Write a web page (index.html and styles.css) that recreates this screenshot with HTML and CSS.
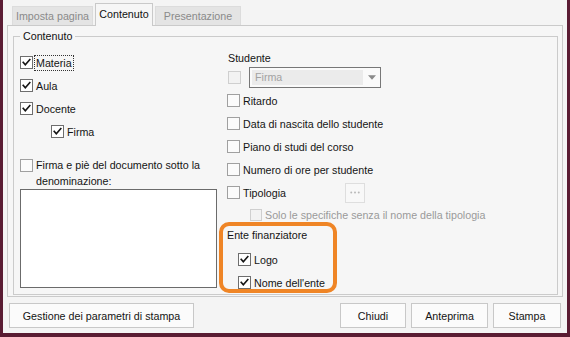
FILE: index.html
```html
<!DOCTYPE html>
<html lang="it">
<head>
<meta charset="utf-8">
<title>Stampa</title>
<link rel="stylesheet" href="styles.css">
</head>
<body>
<div class="frame">
  <div class="window">
    <div class="tabs">
      <div class="tab tab-a">Imposta pagina</div>
      <div class="tab tab-b active">Contenuto</div>
      <div class="tab tab-c">Presentazione</div>
    </div>
    <div class="panel">
      <fieldset class="group">
        <legend>Contenuto</legend>
        <div class="cols">
          <div class="col-left">
            <div class="row"><span class="cb on"><svg viewBox="0 0 11 11"><path d="M2.2 5.4 L4.3 7.8 L8.8 2.6"/></svg></span><span class="txt focus">Materia</span></div>
            <div class="row"><span class="cb on"><svg viewBox="0 0 11 11"><path d="M2.2 5.4 L4.3 7.8 L8.8 2.6"/></svg></span><span class="txt">Aula</span></div>
            <div class="row"><span class="cb on"><svg viewBox="0 0 11 11"><path d="M2.2 5.4 L4.3 7.8 L8.8 2.6"/></svg></span><span class="txt">Docente</span></div>
            <div class="row indent"><span class="cb on"><svg viewBox="0 0 11 11"><path d="M2.2 5.4 L4.3 7.8 L8.8 2.6"/></svg></span><span class="txt">Firma</span></div>
            <div class="multi"><span class="cb off"></span><span class="txt">Firma e piè del documento sotto la<br>denominazione:</span></div>
            <div class="memo"></div>
          </div>
          <div class="col-right">
            <div class="head">Studente</div>
            <div class="select-row">
              <span class="cb dis"></span>
              <div class="select">
                <div class="select-value">Firma</div>
                <div class="select-arrow"><svg viewBox="0 0 9 5"><path d="M0 0 L9 0 L4.5 5 Z"/></svg></div>
              </div>
            </div>
            <div class="row"><span class="cb off"></span><span class="txt">Ritardo</span></div>
            <div class="row"><span class="cb off"></span><span class="txt">Data di nascita dello studente</span></div>
            <div class="row"><span class="cb off"></span><span class="txt">Piano di studi del corso</span></div>
            <div class="row"><span class="cb off"></span><span class="txt">Numero di ore per studente</span></div>
            <div class="row"><span class="cb off"></span><span class="txt tip">Tipologia</span><span class="dots"><svg viewBox="0 0 12 3"><circle cx="1.5" cy="1.5" r="1.2"/><circle cx="6" cy="1.5" r="1.2"/><circle cx="10.5" cy="1.5" r="1.2"/></svg></span></div>
            <div class="row solo"><span class="cb dis small"></span><span class="txt muted">Solo le specifiche senza il nome della tipologia</span></div>
            <div class="ente">
              <div class="ente-title">Ente finanziatore</div>
              <div class="row sub"><span class="cb on"><svg viewBox="0 0 11 11"><path d="M2.2 5.4 L4.3 7.8 L8.8 2.6"/></svg></span><span class="txt">Logo</span></div>
              <div class="row sub"><span class="cb on"><svg viewBox="0 0 11 11"><path d="M2.2 5.4 L4.3 7.8 L8.8 2.6"/></svg></span><span class="txt">Nome dell'ente</span></div>
              <div class="highlight"></div>
            </div>
          </div>
        </div>
      </fieldset>
    </div>
    <div class="buttons">
      <button class="btn btn-params">Gestione dei parametri di stampa</button>
      <span class="spacer"></span>
      <button class="btn btn-close">Chiudi</button>
      <button class="btn btn-preview">Anteprima</button>
      <button class="btn btn-print">Stampa</button>
    </div>
  </div>
</div>
</body>
</html>
```
FILE: styles.css
```css
* { box-sizing: border-box; }
html, body { margin: 0; padding: 0; }
body {
  width: 570px;
  height: 337px;
  overflow: hidden;
  font-family: "Liberation Sans", Arial, sans-serif;
  font-size: 10.7px;
  color: #141414;
}
.frame {
  width: 570px;
  height: 337px;
  background: #5a1c33;
  padding: 0 3px 4px 3px;
}
.window {
  height: 100%;
  background: #f4f4f4;
  display: flex;
  flex-direction: column;
}
.tabs {
  display: flex;
  align-items: flex-end;
  gap: 2px;
  height: 26px;
  padding-left: 9px;
  padding-top: 3px;
}
.tab {
  height: 20px;
  line-height: 19px;
  padding: 0;
  white-space: nowrap;
  background: #e4e4e4;
  border: 1px solid #dcdcdc;
  border-bottom: none;
  color: #8a8a8a;
  text-align: center;
}
.tab-a { width: 81px; }
.tab-b { width: 58px; }
.tab-c { width: 86px; }
.tab.active {
  height: 23px;
  line-height: 21px;
  background: #f6f6f6;
  border-color: #c9c9c9;
  color: #111;
  position: relative;
  z-index: 1;
}
.panel {
  margin: -1px 4px 0 4px;
  height: 272px;
  border: 1px solid #cacaca;
  padding: 4px 4px 3px 5px;
  display: flex;
  flex-direction: column;
  background: #f6f6f6;
}
.group {
  flex: 1;
  margin: 0;
  padding: 8px 6px 0 6px;
  border: 1px solid #cbcbcb;
  min-width: 0;
}
.group legend {
  padding: 0 3px;
  line-height: 13px;
  color: #111;
}
.cols {
  display: flex;
}
.col-left {
  width: 207px;
  flex: none;
}
.col-right {
  flex: 1;
}
.row {
  height: 23px;
  display: flex;
  align-items: center;
  gap: 3px;
}
.row.indent { padding-left: 31px; }
.cb {
  width: 13px;
  height: 13px;
  flex: none;
  border: 1px solid #6e6e6e;
  background: #fff;
  display: inline-flex;
}
.cb svg { width: 11px; height: 11px; }
.cb svg path { fill: none; stroke: #151515; stroke-width: 1.6; stroke-linecap: square; }
.cb.off { border-color: #a0a0a0; background: #fbfbfb; }
.cb.dis { border-color: #cfcfcf; background: #f2f2f2; }
.cb.small { width: 12px; height: 12px; }
.txt { white-space: nowrap; }
.focus { outline: 1px dotted #333; outline-offset: 0; padding: 1px 1px; margin-left: -1px; }
.muted { color: #9a9a9a; }
.multi {
  margin-top: 14px;
  display: flex;
  align-items: flex-start;
  gap: 3px;
  line-height: 16px;
}
.multi .cb { margin-top: 2px; }
.memo {
  width: 197px;
  height: 99px;
  background: #fff;
  border: 1px solid #6b6b6b;
}
.head {
  height: 14px;
  line-height: 14px;
  padding-left: 1px;
}
.select-row {
  margin-top: 2px;
  margin-bottom: 1px;
  height: 21px;
  display: flex;
  align-items: center;
  padding-left: 1px;
}
.select-row .cb { margin-right: 8px; }
.select {
  width: 132px;
  height: 21px;
  border: 1px solid #777;
  background: #fafafa;
  display: flex;
  padding: 2px 0 2px 2px;
}
.select-value {
  flex: 1;
  background: #ebebeb;
  color: #a2a2a2;
  padding-left: 3px;
  line-height: 15px;
}
.select-arrow {
  width: 17px;
  display: flex;
  align-items: center;
  justify-content: center;
}
.select-arrow svg { width: 8px; height: 5px; }
.select-arrow path { fill: #8a8a8a; }
.tip { width: 99px; }
.dots {
  width: 20px;
  height: 20px;
  border: 1px solid #dedede;
  background: #f8f8f8;
  display: flex;
  align-items: center;
  justify-content: center;
}
.dots svg { width: 10px; height: 3px; }
.dots circle { fill: #b8b8b8; }
.row.solo { padding-left: 23px; height: 22px; }
.ente {
  position: relative;
}
.ente-title {
  height: 22px;
  line-height: 18px;
}
.row.sub { padding-left: 11px; }
.highlight {
  position: absolute;
  left: -8px;
  top: -4px;
  width: 118px;
  height: 71px;
  border: 4px solid #ef8526;
  border-radius: 10px;
  pointer-events: none;
}
.buttons {
  display: flex;
  gap: 5px;
  margin-top: 6px;
  padding: 0 6px;
  height: 25px;
}
.spacer { flex: 1; }
.btn {
  height: 25px;
  border: 1px solid #c8c8c8;
  background: #fbfbfb;
  font-family: "Liberation Sans", Arial, sans-serif;
  font-size: 10.7px;
  color: #141414;
  padding: 0;
}
.btn-params { width: 185px; }
.btn-close { width: 66px; }
.btn-preview { width: 77px; }
.btn-print { width: 68px; }
```
